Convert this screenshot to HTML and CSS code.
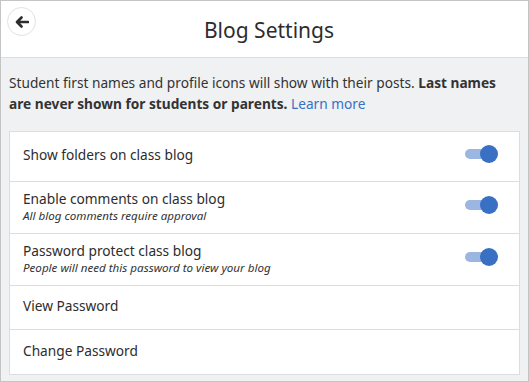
FILE: index.html
```html
<!DOCTYPE html>
<html lang="en">
<head>
  <meta charset="UTF-8" />
  <title>Blog Settings</title>
  <link rel="stylesheet" href="styles.css">
</head>
<body>
  <div class="frame">
    <!-- HEADER -->
    <div class="header">
      <button class="back-button" aria-label="Back">
        <svg width="14" height="12" viewBox="0 0 14 12">
          <path d="M13 6H2.5M6.5 1.5L2 6l4.5 4.5" fill="none" stroke="#2d2d2d" stroke-width="2.6" stroke-linecap="round" stroke-linejoin="round"/>
        </svg>
      </button>
      <h1 class="title">Blog Settings</h1>
    </div>

    <!-- CONTENUTO -->
    <div class="content">
      <p class="intro">
        Student first names and profile icons will show with their posts. <b>Last names are never shown for students or parents.</b> <a href="#" class="link">Learn more</a>
      </p>

      <div class="card">
        <div class="row">
          <div class="row-text">
            <div class="label">Show folders on class blog</div>
          </div>
          <span class="toggle"><span class="knob"></span></span>
        </div>
        <div class="row">
          <div class="row-text">
            <div class="label">Enable comments on class blog</div>
            <div class="hint">All blog comments require approval</div>
          </div>
          <span class="toggle"><span class="knob"></span></span>
        </div>
        <div class="row">
          <div class="row-text">
            <div class="label">Password protect class blog</div>
            <div class="hint">People will need this password to view your blog</div>
          </div>
          <span class="toggle"><span class="knob"></span></span>
        </div>
        <div class="row link-row">
          <div class="label">View Password</div>
        </div>
        <div class="row link-row">
          <div class="label">Change Password</div>
        </div>
      </div>
    </div>
  </div>
</body>
</html>
```

FILE: styles.css
```css
* {
  box-sizing: border-box;
}

body {
  margin: 0;
  font-family: "Noto Sans", "Open Sans", sans-serif;
  color: #2d2d2d;
}

.frame {
  width: 529px;
  height: 382px;
  border: 1px solid #c4c4c4;
  background: #f0f1f3;
  overflow: hidden;
}

.header {
  height: 57px;
  background: #fff;
  border-bottom: 1px solid #dcdde0;
  display: flex;
  align-items: center;
  justify-content: center;
  position: relative;
}

.back-button {
  position: absolute;
  top: 6px;
  left: 6px;
  width: 29px;
  height: 29px;
  border-radius: 50%;
  border: 1px solid #dfe1e8;
  background: #fff;
  display: flex;
  align-items: center;
  justify-content: center;
  padding: 0;
}

.title {
  margin: 0;
  font-size: 21px;
  font-weight: 400;
  color: #2d2d2d;
  padding: 1px 0 0 9px;
}

.content {
  padding: 14px 8px 0 8px;
}

.intro {
  margin: 0 0 17px 0;
  font-size: 13.7px;
  line-height: 21px;
  color: #333;
}

.intro b {
  font-weight: 700;
}

.link {
  color: #3a70c4;
  text-decoration: none;
}

.card {
  background: #fff;
  border: 1px solid #dcdde0;
}

.row {
  display: flex;
  align-items: center;
  justify-content: space-between;
  padding: 0 28px 0 13px;
  border-bottom: 1px solid #dcdde0;
  height: 50px;
}

.row:nth-child(2),
.row:nth-child(3) {
  height: 52px;
}

.row:last-child {
  border-bottom: none;
}

.row-text {
  margin-top: -4px;
}

.link-row {
  height: 44px;
}

.link-row .label {
  margin-top: -4px;
}

.label {
  font-size: 13.7px;
  color: #2d2d2d;
}

.hint {
  font-size: 11.6px;
  font-style: italic;
  color: #333;
}

.toggle {
  position: relative;
  width: 26px;
  height: 10px;
  border-radius: 5px;
  background: #9bb6e0;
  margin-top: -6px;
}

.knob {
  position: absolute;
  right: -7px;
  top: -4px;
  width: 18px;
  height: 18px;
  border-radius: 50%;
  background: #3a70c4;
}
```
